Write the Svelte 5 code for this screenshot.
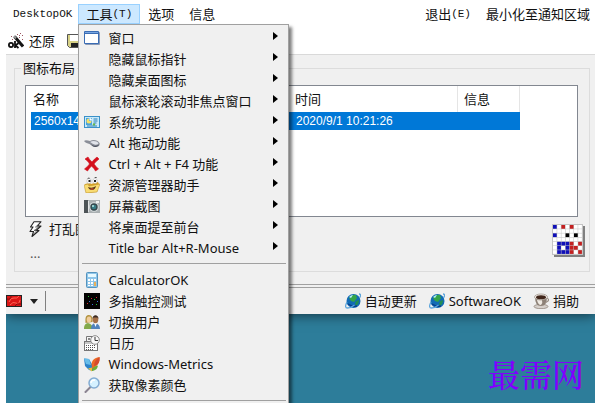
<script>
  const groups = [
    [
      { icon: 'window', label: '窗口', sub: true },
      { label: '隐藏鼠标指针', sub: true },
      { label: '隐藏桌面图标', sub: true },
      { label: '鼠标滚轮滚动非焦点窗口', sub: true },
      { icon: 'system', label: '系统功能', sub: true },
      { icon: 'mouse', label: 'Alt 拖动功能', sub: true },
      { icon: 'cross', label: 'Ctrl + Alt + F4 功能', sub: true },
      { icon: 'folder', label: '资源管理器助手', sub: true },
      { icon: 'camera', label: '屏幕截图', sub: true },
      { label: '将桌面提至前台', sub: true },
      { label: 'Title bar Alt+R-Mouse', sub: true }
    ],
    [
      { icon: 'calculator', label: 'CalculatorOK' },
      { icon: 'touch', label: '多指触控测试' },
      { icon: 'users', label: '切换用户' },
      { icon: 'calendar', label: '日历' },
      { icon: 'metrics', label: 'Windows-Metrics' },
      { icon: 'lens', label: '获取像素颜色' }
    ]
  ];

  const pixels = ['B.R.R..', '.......', 'B..K.K.', '.......', '.BBBR.R', '.B.BRR.', '.BBBR.R'];
  const inks = { B: '#1010b8', R: '#c42020', K: '#000000', '.': '#ffffff' };
</script>

{#snippet glyph(name)}
  <svg class="icon" viewBox="0 0 16 16" aria-hidden="true">
    {#if name === 'window'}
      <rect x="1" y="2" width="15" height="13" rx="1" fill="#8c9cb8" />
      <rect x="0" y="1" width="15" height="13" rx="1" fill="#3a6cb4" />
      <rect x="1" y="4" width="13" height="9" fill="#fff" />
      <path d="M1 2h13v1H1z" fill="#79a7e2" />
    {:else if name === 'system'}
      <rect x=".5" y="2.500" width="15" height="11" fill="#c9eafa" stroke="#3a91c9" />
      <rect x="2" y="4" width="6" height="7" fill="#4aa3db" />
      <path d="M5 4.500A2.500 2.500 0 1 0 7.500 7H5z" fill="#f4e06a" />
      <path d="M5.500 4v2.500H8A2.500 2.500 0 0 0 5.500 4z" fill="#fff" />
      <path d="M9.500 5h4M9.500 7h4M9.500 9h3M3 12h10" stroke="#247cb7" />
      <circle cx="10" cy="10.500" r="1.200" fill="#65b74e" />
    {:else if name === 'mouse'}
      <path d="M0 6c2-1.500 4 0 6 0 3-2 8-1 9.500 2 .8 2-1 4-4 4-3 0-4-2-6-3-2-.5-4-1-5.500-3z" fill="#8a8e98" />
      <path d="M6 7c3-2 7-1 8.500 1 0 1.500-2 2-4 1.500C8.500 9 8 8 6 7z" fill="#e0e3ea" />
      <path d="M7 9c2 2 5 2.500 8 .5-1 3-6 3.500-8-.5z" fill="#4d5260" />
    {:else if name === 'cross'}
      <path d="M1 3l3-2c1 2 2.500 3.500 4 5 1.500-2 3-3.500 5-5l2 2c-2 1.500-3.500 3-5 5 1.500 2 3 3.500 4.500 5l-3 2c-1-2-2.500-3.500-4-5-1.500 1.500-3 3.500-4 5l-3-2c2-1.500 3.500-3 5-5C4.500 6 3 4.500 1 3z" fill="#d40f1c" stroke="#d40f1c" stroke-width=".6" />
    {:else if name === 'folder'}
      <path d="M1 7l5-1 1 1 7-2 1 2-2 8-11 1z" fill="#d9a326" />
      <path d="M0 8l4-1 1 2 11-2-3 8-11 1z" fill="#f9dc72" stroke="#b98d2a" stroke-width=".5" />
      <path d="M4 10q4 2 8-1-1 4-4 4-3 0-4-3z" fill="#56351a" />
      <path d="M6 12q2-1.500 4 0-2 1.500-4 0z" fill="#d84c31" />
      <ellipse cx="5" cy="4" rx="2.200" ry="2.500" fill="#fff" stroke="#999" stroke-width=".4" />
      <ellipse cx="11" cy="4" rx="2.200" ry="2.500" fill="#fff" stroke="#999" stroke-width=".4" />
      <path d="M4.500 3h2v2h-2zM10 3h2v2h-2zM3 1.500l2-1 1 1zM10 1l2-1 1 1z" fill="#222" />
    {:else if name === 'camera'}
      <rect x="0" y="2" width="16" height="13" fill="#aab0b2" />
      <rect x="0" y="2" width="4" height="13" fill="#4d5457" />
      <path d="M4.500 3v11" stroke="#e3e5e6" />
      <circle cx="10" cy="9" r="4.800" fill="#d5dbdc" />
      <circle cx="10" cy="9" r="3.700" fill="#34464c" />
      <circle cx="10" cy="9" r="2.300" fill="#367d85" />
      <circle cx="9" cy="8" r="1" fill="#b9e7e5" />
      <path d="M12 3h3v2h-3z" fill="#eef0f0" />
    {:else if name === 'calculator'}
      <rect x="2.500" y=".5" width="11" height="15" rx="1" fill="#8fc6ea" stroke="#5593bd" />
      <rect x="4" y="2" width="8" height="3" fill="#e7f9ff" />
      <path d="M4 7h2v2H4zM7 7h2v2H7zM10 7h2v2h-2zM4 10h2v2H4zM7 10h2v2H7zM4 13h2v1H4zM7 13h2v1H7z" fill="#fff" />
      <path d="M10 10h2v4h-2z" fill="#e9b05a" />
    {:else if name === 'touch'}
      <rect width="16" height="16" fill="#030303" />
      <path d="M4 3h1v1H4zM10 6h1v1h-1zM12 11h1v1h-1z" fill="#20c435" />
      <path d="M7 5h1v1H7zM3 10h1v1H3zM12 4h1v1h-1z" fill="#d52d2d" />
      <path d="M5 8h1v1H5zM8 11h1v1H8zM13 8h1v1h-1z" fill="#3b72dc" />
    {:else if name === 'users'}
      <path d="M0 15q-.3-5 4-6 4.500 1 5 6z" fill="#82a84a" />
      <path d="M1.500 9C1 3 2 1 5 1s4 3 3.500 7z" fill="#b39442" />
      <ellipse cx="5" cy="5.500" rx="2.300" ry="3" fill="#f0cc9b" />
      <path d="M7 15q0-5 4-6 5 1 5 6z" fill="#5284bd" />
      <path d="M10 9l1.500 4L13 9z" fill="#fff" />
      <ellipse cx="11.500" cy="5.500" rx="2.800" ry="3.700" fill="#a57048" />
      <path d="M8.500 5c0-5 6-5 6 0l-1-1.500H9.500z" fill="#3b2b23" />
    {:else if name === 'calendar'}
      <path d="M2.500 7V1.500h6V5" fill="#f5f5f5" stroke="#777" />
      <path d="M4 3h2v2H4z" fill="#888" />
      <rect x=".5" y="6.500" width="13" height="9" fill="#fff" stroke="#777" />
      <path d="M1 8h12" stroke="#8d8d8d" />
      <path d="M2 10.500h10M2 12.500h10M2 14.500h8" stroke="#555" stroke-dasharray="1 1" />
      <circle cx="11" cy="5" r="4.300" fill="#fafafa" stroke="#888" />
      <path d="M11 2v3.500h3" fill="none" stroke="#333" />
    {:else if name === 'metrics'}
      <path d="M0 2.500l5 .5 4 7v5l-4-1-4-4z" fill="#2c83c9" />
      <path d="M0 2.500l5 .5 2 6-5-1z" fill="#67bde9" />
      <path d="M8 11C6.500 6 9 2 15.500 1 16 6 14 10 8 13z" fill="#ed6b24" />
      <path d="M10 10c0-4 2-7 5.500-9 .5 5-1 8-5.500 9z" fill="#d64b2e" />
      <path d="M8 15c0-3 2-5 6-5.500-.5 3-2 5-6 5.500z" fill="#70ad38" />
      <path d="M4 12.500l4-1v4z" fill="#f0c034" />
    {:else if name === 'lens'}
      <path d="M1.500 15l5-5" stroke="#8b8491" stroke-width="2" stroke-linecap="round" />
      <circle cx="10" cy="6" r="5" fill="#d5f1ff" stroke="#83acd2" stroke-width="1.500" />
      <path d="M7 6q0-3 4-3" fill="none" stroke="#fff" stroke-width="1.500" />
    {:else if name === 'wand'}
      <path d="M6.500 3.500L15 13.500" stroke="#151515" stroke-width="3" />
      <path d="M6 3l2 2.300" stroke="#999" stroke-width="2" />
      <circle cx="3" cy="12" r="2.100" fill="none" stroke="#111" stroke-width="1.800" />
      <path d="M7 8v7M10.500 10l-3 2.500 3 2.500" fill="none" stroke="#111" stroke-width="1.800" />
      <path d="M9 1h1v1H9zM12 0h1v1h-1zM14 2h1v1h-1zM11 4h1v1h-1zM14 6h1v1h-1zM11 2h1v1h-1zM3 3h1v1H3zM4 6h1v1H4z" fill="#9b5560" />
    {:else if name === 'disk'}
      <path d="M.5 1.500h15v13h-13l-2-2z" fill="#d8d287" stroke="#555" />
      <path d="M3 2h10v6H3z" fill="#fff" />
      <path d="M4 10h9v4H4z" fill="#222" />
    {:else if name === 'bolt'}
      <path d="M6 .7h7L9.500 5H13L8 9.500h3L4 15.500l1.500-5H2L5 6H2.500z" fill="#fff" stroke="#222" stroke-width="1.100" stroke-linejoin="round" />
      <path d="M12 2L7.500 6H11L6 9.500h3L5 13.500" fill="none" stroke="#444" stroke-width=".7" />
    {:else if name === 'globe'}
      <circle cx="8.500" cy="8" r="7" fill="#126bb5" />
      <path d="M4 5q3-4 7-3l1 3-3 4-3-1z" fill="#35a548" />
      <path d="M11 8l3-1q0 4-3 6l-1-2z" fill="#238e55" />
      <path d="M4 4q2-2 4-2L6 5z" fill="#b4eef0" />
      <path d="M3 11q4 3 9 2" fill="none" stroke="#083e8c" stroke-width="1.500" />
      <path d="M14 1q3 0 .5 4M2 9q-3 6 .5 6 3.500 0 7-3" fill="none" stroke="#5da5dc" stroke-width="1.300" />
    {:else if name === 'coffee'}
      <ellipse cx="8" cy="13.500" rx="7" ry="2.200" fill="#d6d0cb" stroke="#85796f" stroke-width=".7" />
      <path d="M2 4q0 9 6 9t6-9z" fill="#8d8177" />
      <path d="M4 7q1 5 4 5 2-2 1-5z" fill="#eee9e2" />
      <path d="M13 5q4 1 2 3l-3 2" fill="none" stroke="#9a8e84" stroke-width="1.200" />
      <ellipse cx="8" cy="4" rx="6.500" ry="3" fill="#f2eee9" stroke="#9a8e84" stroke-width=".7" />
      <ellipse cx="8" cy="4.200" rx="5" ry="2" fill="#40251a" />
    {:else if name === 'flag'}
      <rect y="2" width="16" height="12" fill="#242424" />
      <rect x="1" y="3" width="14" height="10" fill="#dc1717" />
      <path d="M3 9q2-5 5-4t5-2M4 12q3-4 6-2t4-3" fill="none" stroke="#ff6352" />
      <path d="M1 6q4 1 4-3M9 13q1-3 6-2" fill="none" stroke="#870b0b" />
    {/if}
  </svg>
{/snippet}

<main class="desktop">
  <section class="window">
    <nav class="menubar">
      <button class="latin">DesktopOK</button>
      <div class="tools">
        <button class="active">工具<span class="latin">(T)</span></button>
        <div class="menu" role="menu">
          {#each groups as group}
            {#each group as item}
              <button class="entry" role="menuitem">
                {@render glyph(item.icon)}
                <span>{item.label}</span>
                {#if item.sub}<i class="arrow"></i>{/if}
              </button>
            {/each}
            <hr />
          {/each}
        </div>
      </div>
      <button>选项</button>
      <button>信息</button>
      <button class="exit">退出<span class="latin">(E)</span></button>
      <button>最小化至通知区域</button>
    </nav>

    <div class="toolbar">
      <button>{@render glyph('wand')}还原</button>
      <button aria-label="保存">{@render glyph('disk')}</button>
    </div>

    <div class="panel">
      <fieldset>
        <legend>图标布局</legend>
        <div class="list">
          <table>
            <thead>
              <tr><th class="name">名称</th><th class="time">时间</th><th class="info">信息</th></tr>
            </thead>
            <tbody>
              <tr><td>2560x1440</td><td>2020/9/1 10:21:26</td><td></td></tr>
            </tbody>
          </table>
        </div>
        <div class="below">
          <div class="actions">
            <button>{@render glyph('bolt')}打乱图标</button>
            <span class="dots">...</span>
          </div>
          <svg class="logo" viewBox="0 0 33 33" aria-hidden="true">
            <path d="M2 2h31v31H2z" fill="#808080" />
            <path d="M0 0h31v31H0z" fill="#c4c4c4" />
            {#each pixels as row, y}
              {#each row as ink, x}
                <rect x={1 + x * 4.2} y={1 + y * 4.2} width="3.700" height="3.700" fill={inks[ink]} />
              {/each}
            {/each}
          </svg>
        </div>
      </fieldset>
    </div>

    <footer>
      <button class="lang" aria-label="语言">{@render glyph('flag')}<i class="down"></i></button>
      <a class="push" href="#update">{@render glyph('globe')}自动更新</a>
      <a href="#software">{@render glyph('globe')}SoftwareOK</a>
      <a href="#donate">{@render glyph('coffee')}捐助</a>
    </footer>
  </section>
  <div class="watermark">最需网</div>
</main>

<style>
  :global(body) { background: #fff; }
  .desktop {
    position: relative;
    box-sizing: border-box;
    height: 100vh;
    margin: 0 6px;
    overflow: hidden;
    background: #2d7d9a;
    color: #111;
    font: 13px/18px "Noto Sans", "Noto Sans CJK SC", sans-serif;
  }
  button {
    display: flex;
    align-items: center;
    padding: 0;
    border: 0;
    background: none;
    color: inherit;
    font: inherit;
    white-space: nowrap;
  }
  .icon { flex: none; width: 16px; height: 16px; }
  .window { box-shadow: 0 1px 12px rgba(0, 0, 0, .6); background: #f0f0f0; }

  .menubar {
    display: flex;
    align-items: center;
    height: 28px;
    padding: 0 5px 0 7px;
    box-sizing: border-box;
    background: #fff;
  }
  .menubar > button { margin-right: 15px; }
  .menubar > button:last-child { margin-right: 0; }
  .latin { font-family: "Liberation Mono", monospace; font-size: 11px; }
  .menubar > button.latin { margin-right: 6px; }
  .menubar > .exit { margin-left: auto; }
  .tools { position: relative; margin-right: 8px; }
  .active {
    box-sizing: border-box;
    height: 20px;
    padding: 0 7px;
    border: 1px solid #99d1ff;
    background: #cce8ff;
  }
  .menu {
    position: absolute;
    z-index: 2;
    top: 20px;
    left: 0;
    box-sizing: border-box;
    width: 211px;
    padding: 2px 2px 2px 3px;
    border: 1px solid #a0a0a0;
    background: #f0f0f0;
    box-shadow: 3px 3px 3px rgba(0, 0, 0, .5);
  }
  .entry { gap: 8px; width: 100%; height: 21px; padding: 0 8px 0 2px; }
  .arrow {
    margin: 0 0 4px auto;
    border: 4px solid transparent;
    border-left: 5px solid #000;
    border-right: 0;
  }
  hr { margin: 5px 0; border: 0; border-top: 1px solid #a0a0a0; }

  .toolbar {
    display: flex;
    align-items: center;
    gap: 12px;
    height: 26px;
    padding-left: 2px;
    border-bottom: 1px solid #d9d9d9;
    background: #fff;
  }
  .toolbar button { gap: 5px; }

  .panel { padding: 4px 5px 12px 8px; border-bottom: 1px solid #a0a0a0; }
  fieldset {
    min-width: 0;
    margin: 0;
    padding: 8px 4px 6px 10px;
    border: 1px solid #dcdcdc;
  }
  legend { margin-left: -4px; padding: 0 2px; }
  .list {
    box-sizing: border-box;
    height: 132px;
    margin-right: 7px;
    border: 1px solid #828790;
    background: #fff;
    overflow: hidden;
  }
  table { width: 494px; border-collapse: separate; border-spacing: 0; table-layout: fixed; }
  th { height: 26px; padding: 0 0 0 6px; border-right: 1px solid #e5e5e5; font-weight: 400; text-align: left; box-sizing: border-box; }
  .name { width: 263px; padding-left: 7px; }
  .time { width: 169px; }
  td { height: 18px; padding: 0 0 0 7px; background: #0078d7; color: #fff; font: 12px/18px "Liberation Sans", sans-serif; }
  td:first-child { padding-left: 3px; border-left: 5px solid #fff; }
  .below { display: flex; justify-content: space-between; align-items: center; height: 48px; }
  .actions { display: flex; flex-direction: column; gap: 6px; padding-left: 3px; }
  .actions button { gap: 5px; }
  .dots { padding-left: 2px; color: #555; }
  .logo { width: 33px; height: 33px; margin-bottom: 2px; }

  footer {
    display: flex;
    align-items: center;
    gap: 12px;
    height: 26px;
    margin-top: 2px;
    padding-right: 16px;
    border-top: 1px solid #a0a0a0;
  }
  footer a { display: flex; align-items: center; gap: 4px; color: inherit; text-decoration: none; }
  .push { margin-left: auto; }
  .lang { gap: 8px; height: 20px; padding-right: 7px; border-right: 1px solid #808080; }
  .down { border: 4px solid transparent; border-top: 5px solid #222; border-bottom: 0; }
  .watermark {
    position: absolute;
    right: 11px;
    bottom: 10px;
    color: #8000ff;
    font: 500 32px/40px "Noto Serif CJK SC", "Noto Sans CJK SC", serif;
  }
</style>
